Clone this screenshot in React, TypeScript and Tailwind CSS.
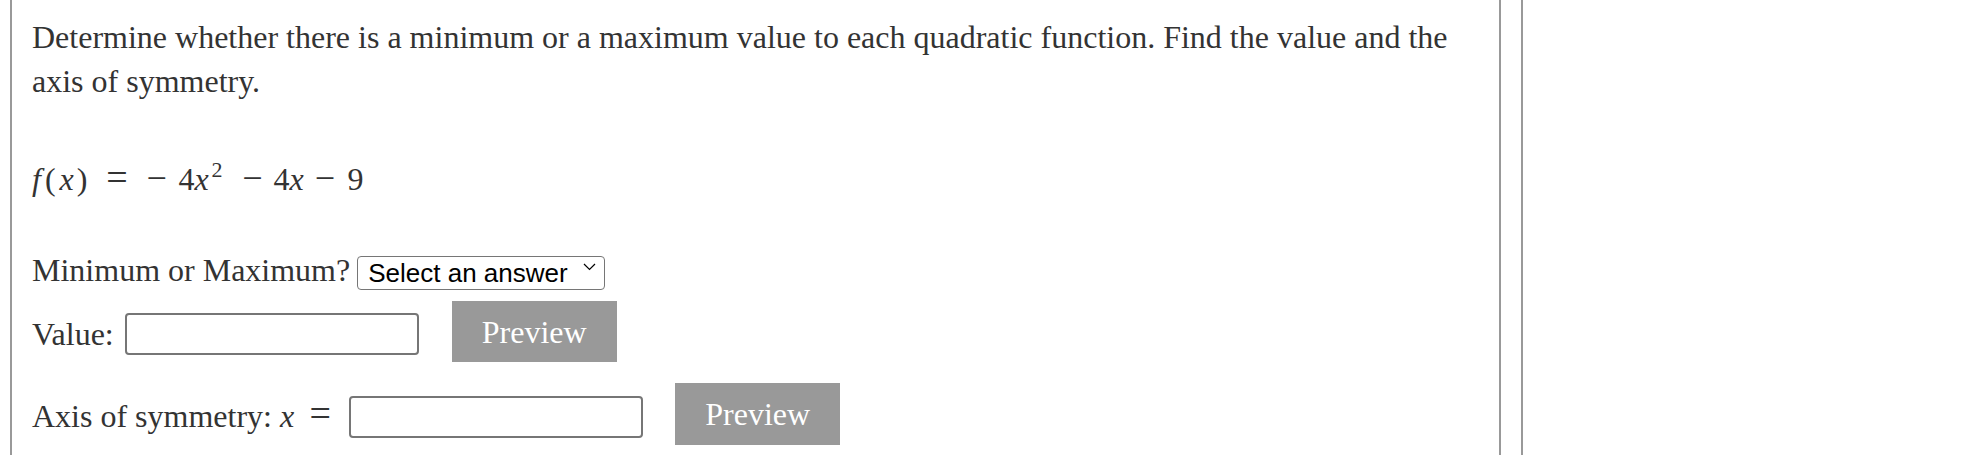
import { useState } from "react";

const serif = "font-['Liberation_Serif',_'Times_New_Roman',_serif]";

function Preview() {
  return (
    <button className={`${serif} flex h-full w-[165px] items-center justify-center bg-[#999] text-[32px] text-white`}>
      Preview
    </button>
  );
}

function AnswerBox({ className = "" }: { className?: string }) {
  const [value, setValue] = useState("");
  return (
    <input
      value={value}
      onChange={(e) => setValue(e.target.value)}
      className={`h-[42px] w-[294px] rounded-[4px] border-2 border-[#767676] bg-white px-2 text-[24px] outline-none ${className}`}
    />
  );
}

export default function App() {
  const [choice, setChoice] = useState("");

  return (
    <div className="flex h-[455px] w-[1963px] overflow-hidden bg-white text-[#333]">
      <div className="w-[10px] shrink-0" />

      {/* Question panel */}
      <div className={`${serif} w-[1491px] shrink-0 border-x-2 border-[#999] pl-[20px] pr-[20px] pt-[15px] text-[32px] leading-[44px]`}>
        <p>
          Determine whether there is a minimum or a maximum value to each quadratic function. Find the value and the
          axis of symmetry.
        </p>

        {/* f(x) = -4x^2 - 4x - 9 */}
        <div className="mt-[52px] flex items-baseline">
          <span className="italic pr-[4px]">f</span>
          <span className="pr-[1px]">(</span>
          <span className="italic px-[3px]">x</span>
          <span>)</span>
          <span className="inline-block w-[59px] text-center text-[38px]">=</span>
          <span className="inline-block w-[18px] text-center text-[36px]">−</span>
          <span className="ml-[14px] inline-block w-[50px]">
            4<span className="italic pr-[3px]">x</span>
            <span className="relative -top-[13px] text-[22px] leading-none">2</span>
          </span>
          <span className="ml-[6px] inline-block w-[36px] text-center text-[36px]">−</span>
          <span className="ml-[3px] inline-block w-[32px]">
            4<span className="italic">x</span>
          </span>
          <span className="ml-[4px] inline-block w-[31px] text-center text-[36px]">−</span>
          <span className="ml-[7px]">9</span>
        </div>

        {/* Min or max */}
        <div className="mt-[47px] flex items-start gap-[7px]">
          <span>Minimum or Maximum?</span>
          <div className="relative mt-[1px]">
            <select
              value={choice}
              onChange={(e) => setChoice(e.target.value)}
              className="h-[34px] w-[248px] appearance-none rounded-[4px] border border-[#767676] bg-white pl-[10px] font-['Liberation_Sans',_Arial,_sans-serif] text-[26px] leading-[32px] text-black outline-none"
            >
              <option value="">Select an answer</option>
              <option value="min">Minimum</option>
              <option value="max">Maximum</option>
            </select>
            <svg
              className="pointer-events-none absolute right-[9px] top-[14px] h-[8px] w-[13px]"
              viewBox="0 0 13 8"
              fill="none"
              stroke="#000"
              strokeWidth="1.2"
            >
              <path d="M1 1 L6.5 6.5 L12 1" />
            </svg>
          </div>
        </div>

        {/* Value */}
        <div className="mt-[8px] flex h-[61px] items-start">
          <span className="mt-[11px]">Value:</span>
          <AnswerBox className="ml-[11px] mt-[12px] w-[293px]" />
          <div className="ml-[33px] h-[61px]">
            <Preview />
          </div>
        </div>

        {/* Axis of symmetry */}
        <div className="mt-[21px] flex h-[62px] items-start">
          <span className="mt-[11px]">Axis of symmetry:</span>
          <span className="mt-[11px] ml-[8px] italic">x</span>
          <span className="mt-[8px] ml-[6px] inline-block w-[40px] text-center text-[38px]">=</span>
          <AnswerBox className="ml-[9px] mt-[13px]" />
          <div className="ml-[32px] h-[62px]">
            <Preview />
          </div>
        </div>
      </div>

      <div className="w-[20px] shrink-0" />

      {/* Side panel */}
      <div className="flex-1 border-l-2 border-[#999]" />
    </div>
  );
}
